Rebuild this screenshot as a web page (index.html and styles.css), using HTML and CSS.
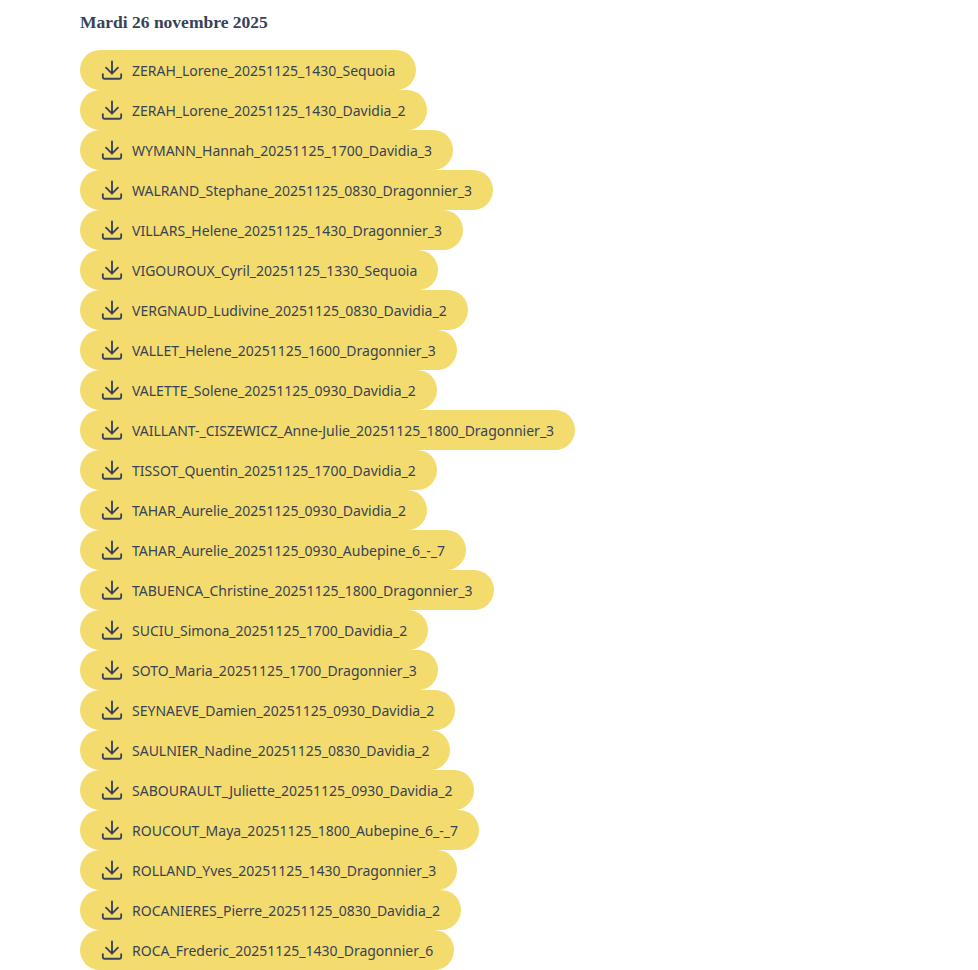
FILE: index.html
```html
<!DOCTYPE html>
<html lang="en">
<head>
    <meta charset="UTF-8">
    <meta name="viewport" content="width=device-width, initial-scale=1.0">
    <title>Fichiers</title>
    <link rel="stylesheet" href="styles.css">
</head>
<body>
    <svg class="sprite" width="0" height="0">
        <symbol id="dl" viewBox="0 0 24 24">
            <path d="M12 2.5V16M5.5 9.5L12 16L18.5 9.5M2 16.5V19.5C2 20.6 2.9 21.5 4 21.5H20C21.1 21.5 22 20.6 22 19.5V16.5" fill="none" stroke="currentColor" stroke-width="2" stroke-linecap="round" stroke-linejoin="round"/>
        </symbol>
    </svg>
    <div class="container">
        <h2>Mardi 26 novembre 2025</h2>
        <ul class="files">
            <li><a class="file" href="#"><svg class="icon"><use href="#dl"/></svg>ZERAH_Lorene_20251125_1430_Sequoia</a></li>
            <li><a class="file" href="#"><svg class="icon"><use href="#dl"/></svg>ZERAH_Lorene_20251125_1430_Davidia_2</a></li>
            <li><a class="file" href="#"><svg class="icon"><use href="#dl"/></svg>WYMANN_Hannah_20251125_1700_Davidia_3</a></li>
            <li><a class="file" href="#"><svg class="icon"><use href="#dl"/></svg>WALRAND_Stephane_20251125_0830_Dragonnier_3</a></li>
            <li><a class="file" href="#"><svg class="icon"><use href="#dl"/></svg>VILLARS_Helene_20251125_1430_Dragonnier_3</a></li>
            <li><a class="file" href="#"><svg class="icon"><use href="#dl"/></svg>VIGOUROUX_Cyril_20251125_1330_Sequoia</a></li>
            <li><a class="file" href="#"><svg class="icon"><use href="#dl"/></svg>VERGNAUD_Ludivine_20251125_0830_Davidia_2</a></li>
            <li><a class="file" href="#"><svg class="icon"><use href="#dl"/></svg>VALLET_Helene_20251125_1600_Dragonnier_3</a></li>
            <li><a class="file" href="#"><svg class="icon"><use href="#dl"/></svg>VALETTE_Solene_20251125_0930_Davidia_2</a></li>
            <li><a class="file" href="#"><svg class="icon"><use href="#dl"/></svg>VAILLANT-_CISZEWICZ_Anne-Julie_20251125_1800_Dragonnier_3</a></li>
            <li><a class="file" href="#"><svg class="icon"><use href="#dl"/></svg>TISSOT_Quentin_20251125_1700_Davidia_2</a></li>
            <li><a class="file" href="#"><svg class="icon"><use href="#dl"/></svg>TAHAR_Aurelie_20251125_0930_Davidia_2</a></li>
            <li><a class="file" href="#"><svg class="icon"><use href="#dl"/></svg>TAHAR_Aurelie_20251125_0930_Aubepine_6_-_7</a></li>
            <li><a class="file" href="#"><svg class="icon"><use href="#dl"/></svg>TABUENCA_Christine_20251125_1800_Dragonnier_3</a></li>
            <li><a class="file" href="#"><svg class="icon"><use href="#dl"/></svg>SUCIU_Simona_20251125_1700_Davidia_2</a></li>
            <li><a class="file" href="#"><svg class="icon"><use href="#dl"/></svg>SOTO_Maria_20251125_1700_Dragonnier_3</a></li>
            <li><a class="file" href="#"><svg class="icon"><use href="#dl"/></svg>SEYNAEVE_Damien_20251125_0930_Davidia_2</a></li>
            <li><a class="file" href="#"><svg class="icon"><use href="#dl"/></svg>SAULNIER_Nadine_20251125_0830_Davidia_2</a></li>
            <li><a class="file" href="#"><svg class="icon"><use href="#dl"/></svg>SABOURAULT_Juliette_20251125_0930_Davidia_2</a></li>
            <li><a class="file" href="#"><svg class="icon"><use href="#dl"/></svg>ROUCOUT_Maya_20251125_1800_Aubepine_6_-_7</a></li>
            <li><a class="file" href="#"><svg class="icon"><use href="#dl"/></svg>ROLLAND_Yves_20251125_1430_Dragonnier_3</a></li>
            <li><a class="file" href="#"><svg class="icon"><use href="#dl"/></svg>ROCANIERES_Pierre_20251125_0830_Davidia_2</a></li>
            <li><a class="file" href="#"><svg class="icon"><use href="#dl"/></svg>ROCA_Frederic_20251125_1430_Dragonnier_6</a></li>
        </ul>
    </div>
</body>
</html>
```

FILE: styles.css
```css
html, body {
    height: 970px;
    overflow: hidden;
}
body {
    margin: 0;
    background: #fff;
    color: #374357;
    font-family: "Noto Sans", "Open Sans", sans-serif;
}
.sprite {
    display: block;
    height: 0;
}
.container {
    padding: 12px 80px 0;
}
h2 {
    margin: 0 0 18px;
    height: 20px;
    font-family: "Liberation Serif", serif;
    font-size: 17.5px;
    line-height: 20px;
    font-weight: bold;
}
.files {
    list-style: none;
    margin: 0;
    padding: 0;
}
.file {
    display: inline-flex;
    align-items: center;
    gap: 9px;
    height: 40px;
    padding: 0 21px;
    border-radius: 20px;
    background: #f4db6d;
    color: #374357;
    font-size: 14px;
    text-decoration: none;
    vertical-align: top;
}
.files li {
    height: 40px;
}
.icon {
    width: 22px;
    height: 22px;
    flex: none;
}
```
